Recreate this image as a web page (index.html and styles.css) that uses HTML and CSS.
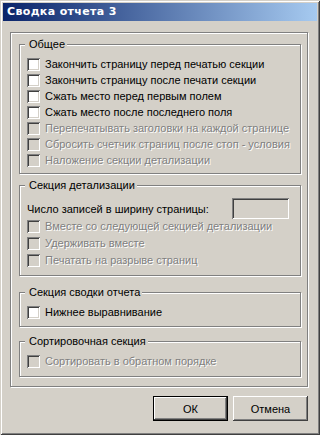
FILE: index.html
```html
<!DOCTYPE html>
<html lang="ru">
<head>
    <meta charset="UTF-8">
    <title>Сводка отчета 3</title>
    <link rel="stylesheet" href="styles.css">
</head>
<body>
    <div class="window">
        <div class="titlebar">Сводка отчета 3</div>

        <div class="frame">
            <div class="group g1">
                <span class="legend">Общее</span>
                <label class="check"><span class="box"></span>Закончить страницу перед печатью секции</label>
                <label class="check"><span class="box"></span>Закончить страницу после печати секции</label>
                <label class="check"><span class="box"></span>Сжать место перед первым полем</label>
                <label class="check"><span class="box"></span>Сжать место после последнего поля</label>
                <label class="check disabled"><span class="box"></span>Перепечатывать заголовки на каждой странице</label>
                <label class="check disabled"><span class="box"></span>Сбросить счетчик страниц после стоп - условия</label>
                <label class="check disabled"><span class="box"></span>Наложение секции детализации</label>
            </div>

            <div class="group g2">
                <span class="legend">Секция детализации</span>
                <div class="field">
                    <span>Число записей в ширину страницы:</span>
                    <span class="edit"></span>
                </div>
                <label class="check disabled"><span class="box"></span>Вместе со следующей секцией детализации</label>
                <label class="check disabled"><span class="box"></span>Удерживать вместе</label>
                <label class="check disabled"><span class="box"></span>Печатать на разрыве страниц</label>
            </div>

            <div class="group g3">
                <span class="legend">Секция сводки отчета</span>
                <label class="check"><span class="box"></span>Нижнее выравнивание</label>
            </div>

            <div class="group g4">
                <span class="legend">Сортировочная секция</span>
                <label class="check disabled"><span class="box"></span>Сортировать в обратном порядке</label>
            </div>
        </div>

        <div class="buttons">
            <button class="btn default">ОК</button>
            <button class="btn">Отмена</button>
        </div>
    </div>
</body>
</html>
```

FILE: styles.css
```css
body {
    margin: 0;
    font-family: "Liberation Sans", Arial, sans-serif;
    font-size: 11px;
    color: #000;
    background: #d4d0c8;
}
.window {
    width: 320px;
    height: 435px;
    box-sizing: border-box;
    padding: 3px;
    background: #d4d0c8;
    box-shadow: inset 1px 1px 0 #d4d0c8, inset -1px -1px 0 #404040,
                inset 2px 2px 0 #fff, inset -2px -2px 0 #808080;
}
.titlebar {
    height: 18px;
    line-height: 18px;
    padding-left: 4px;
    color: #fff;
    font-family: "DejaVu Sans", sans-serif;
    font-weight: bold;
    font-size: 11px;
    letter-spacing: 0.35px;
    background: linear-gradient(to right, #0a246a, #a6caf0);
}
.frame {
    width: 298px;
    height: 355px;
    box-sizing: border-box;
    margin: 11px 0 0 7px;
    padding: 11px 6px 0 8px;
    border: 1px solid #808080;
    box-shadow: inset 1px 1px 0 #fff, 1px 1px 0 #fff;
}
.group {
    box-sizing: border-box;
    padding: 0 6px 0 7px;
    border: 1px solid #808080;
    box-shadow: inset 1px 1px 0 #fff, 1px 1px 0 #fff;
}
.g1 { height: 130px; }
.g2 { height: 91px; margin-top: 11px; }
.g3 { height: 35px; margin-top: 16px; }
.g4 { height: 36px; margin-top: 14px; }
.legend {
    display: block;
    width: fit-content;
    height: 13px;
    line-height: 13px;
    margin: -7px 0 6px -2px;
    padding: 0 2px 0 4px;
    background: #d4d0c8;
}
.check {
    display: flex;
    align-items: flex-start;
    height: 16px;
    line-height: 15px;
    white-space: nowrap;
}
.g2 .check { height: 17px; }
.g3 .check { margin-top: 1px; }
.box {
    width: 13px;
    height: 13px;
    margin: 1px 5px 0 0;
    flex: none;
    background: #fff;
    box-shadow: inset 1px 1px 0 #808080, inset -1px -1px 0 #fff,
                inset 2px 2px 0 #404040, inset -2px -2px 0 #d4d0c8;
}
.disabled {
    color: #808080;
    text-shadow: 1px 1px 0 #fff;
}
.disabled .box {
    background: #d4d0c8;
}
.field {
    display: flex;
    align-items: center;
    justify-content: space-between;
    height: 21px;
    margin-top: 4px;
}
.edit {
    width: 57px;
    height: 21px;
    margin-right: 5px;
    background: #d4d0c8;
    box-shadow: inset 1px 1px 0 #808080, inset -1px -1px 0 #fff,
                inset 2px 2px 0 #404040, inset -2px -2px 0 #d4d0c8;
}
.buttons {
    display: flex;
    justify-content: flex-end;
    gap: 5px;
    margin: 9px 9px 0 0;
}
.btn {
    width: 75px;
    height: 25px;
    padding: 0;
    border: none;
    font-family: "Liberation Sans", Arial, sans-serif;
    font-size: 11px;
    color: #000;
    background: #d4d0c8;
    box-shadow: inset -1px -1px 0 #404040, inset 1px 1px 0 #fff,
                inset -2px -2px 0 #808080;
}
.btn.default {
    border: 1px solid #000;
}
```
